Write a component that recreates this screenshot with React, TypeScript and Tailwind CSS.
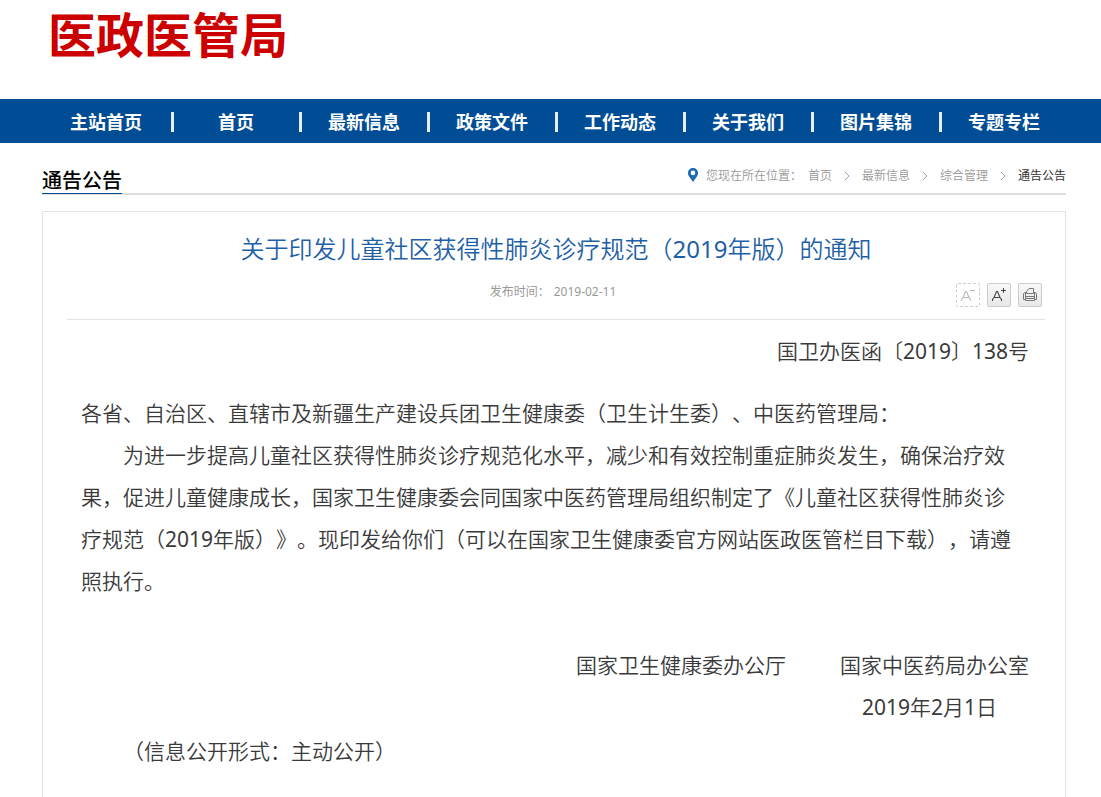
import { Fragment, type ReactNode } from "react";

const navItems = [
  "主站首页",
  "首页",
  "最新信息",
  "政策文件",
  "工作动态",
  "关于我们",
  "图片集锦",
  "专题专栏",
];

const crumbs = ["首页", "最新信息", "综合管理"];

function PinIcon() {
  return (
    <svg width="10" height="14" viewBox="0 0 10 14" aria-hidden="true">
      <path
        d="M5 0C2.2 0 0 2.1 0 4.9c0 1.4.5 2.5 1.1 3.6L5 14l3.9-5.5C9.5 7.4 10 6.3 10 4.9 10 2.1 7.8 0 5 0Zm0 2.600a2.300 2.300 0 1 1 0 4.600 2.300 2.300 0 0 1 0-4.600Z"
        fill="#1e6bb0"
        fillRule="evenodd"
      />
    </svg>
  );
}

function Chevron() {
  return (
    <svg width="6" height="10" viewBox="0 0 6 10" fill="none" stroke="#a0a0a0" aria-hidden="true">
      <path d="M1 1l4 4-4 4" />
    </svg>
  );
}

function FontIcon({ bigger = false }: { bigger?: boolean }) {
  return (
    <svg width="16" height="16" viewBox="0 0 16 16" fill="none" stroke="currentColor" aria-hidden="true">
      <path d="M1.500 14v-1.500l1.500-2L5.500 4.500h1L9 10.500l1.500 2V14M3 10.500h6" strokeWidth="1.100" />
      <path d={bigger ? "M10 3.500h5M12.500 1v5" : "M10 3.500h5"} />
    </svg>
  );
}

function PrintIcon() {
  return (
    <svg width="14" height="14" viewBox="0 0 14 14" fill="none" stroke="currentColor" aria-hidden="true">
      <path d="M3.500 5.500V3.500L6 .5h4.500v5M3.500 5.500h7M3 8.500h8" />
      <path d="M3.500 4.500H2L.5 5.500v6h2v1h9v-1h2v-6l-1.500-1h-1.500M2.500 5v6.500M11.500 5v6.500M2.500 10.500h9" />
    </svg>
  );
}

// The Latin face has no demi-light cut, so digits go one step heavier
function Num({ children }: { children: ReactNode }) {
  return <span className="font-normal">{children}</span>;
}

export default function App() {
  return (
    <div
      lang="zh-CN"
      className="flex min-h-screen flex-col bg-white font-['Noto_Sans','Noto_Sans_CJK_SC',sans-serif] text-[#3a3a3a] [text-spacing-trim:space-all]"
    >
      <header className="h-[99px] pl-12">
        <h1 className="text-5xl leading-[70px] font-bold text-[#cc0000]">医政医管局</h1>
      </header>

      <nav className="bg-[#004d95] pr-[35px] pl-[42px]">
        <ul className="grid h-11 grid-cols-8 pt-0.5">
          {navItems.map((item, i) => (
            <li key={item} className="flex items-center">
              {i > 0 && <span className="ml-px h-5 w-[3px] bg-white/90" />}
              <a href="#" className="flex-1 text-center text-lg font-bold text-white">
                {item}
              </a>
            </li>
          ))}
        </ul>
      </nav>

      {/* Section title and breadcrumb */}
      <div className="mt-5 mr-[35px] ml-[42px] flex h-8 justify-between border-b-2 border-[#dedede]">
        <h2 className="h-[31px] border-b border-[#004d95] text-xl leading-9 font-medium text-black">
          通告公告
        </h2>
        <div className="flex h-6 items-center text-xs leading-4 text-[#999999]">
          <PinIcon />
          <span className="mt-0.5 ml-2 flex items-center font-[350]">
            <span className="mr-1.5">您现在所在位置：</span>
            {crumbs.map((crumb) => (
              <Fragment key={crumb}>
                <a href="#">{crumb}</a>
                <span className="mx-3">
                  <Chevron />
                </span>
              </Fragment>
            ))}
            <a href="#" className="font-normal text-[#333333]">
              通告公告
            </a>
          </span>
        </div>
      </div>

      <main className="mt-4 mr-[35px] ml-[42px] flex-1 border border-b-0 border-[#e3e3e3] pr-5 pl-6">
        <div className="flex flex-col border-b border-[#e3e3e3]">
          <h3 className="pt-4 text-center text-2xl leading-[42px] font-[350] text-[#1f5fa6]">
            关于印发儿童社区获得性肺炎诊疗规范（<Num>2019</Num>年版）的通知
          </h3>
          <div className="grid h-[49px] grid-cols-[1fr_auto_1fr]">
            <p className="col-start-2 flex gap-1 pt-3 pr-1.5 text-xs leading-5 text-[#999999]">
              <span>发布时间：</span>
              <time>2019-02-11</time>
            </p>
            <div className="flex justify-end gap-[7px] pt-[13px] pr-[3px]">
              <button
                type="button"
                aria-label="缩小字体"
                className="flex size-6 items-center justify-center rounded-xs border border-dashed border-[#cccccc] text-[#b8b8b8]"
              >
                <FontIcon />
              </button>
              <button
                type="button"
                aria-label="放大字体"
                className="flex size-6 items-center justify-center rounded-xs border border-[#cccccc] bg-linear-to-b from-[#f8f8f8] to-[#e8e8e8] text-[#444444]"
              >
                <FontIcon bigger />
              </button>
              <button
                type="button"
                aria-label="打印"
                className="flex size-6 items-center justify-center rounded-xs border border-[#cccccc] bg-linear-to-b from-[#f8f8f8] to-[#e8e8e8] text-[#777777]"
              >
                <PrintIcon />
              </button>
            </div>
          </div>
        </div>

        <article className="pt-2.5 pr-4 pl-3.5 text-[21px] leading-[42px] font-[350]">
          <p className="text-right">
            国卫办医函〔<Num>2019</Num>〕<Num>138</Num>号
          </p>
          <p className="mt-5">各省、自治区、直辖市及新疆生产建设兵团卫生健康委（卫生计生委）、中医药管理局：</p>
          <p className="pr-3 indent-[2em]">
            为进一步提高儿童社区获得性肺炎诊疗规范化水平，减少和有效控制重症肺炎发生，确保治疗效果，促进儿童健康成长，国家卫生健康委会同国家中医药管理局组织制定了《儿童社区获得性肺炎诊疗规范（<Num>2019</Num>年版）》。现印发给你们（可以在国家卫生健康委官方网站医政医管栏目下载），请遵照执行。
          </p>
          <p className="mt-[42px] flex justify-end gap-[54px]">
            <span>国家卫生健康委办公厅</span>
            <span>国家中医药局办公室</span>
          </p>
          <p className="pr-8 text-right">
            <Num>2019</Num>年<Num>2</Num>月<Num>1</Num>日
          </p>
          <p className="indent-[2em] leading-[46px]">（信息公开形式：主动公开）</p>
        </article>
      </main>
    </div>
  );
}
